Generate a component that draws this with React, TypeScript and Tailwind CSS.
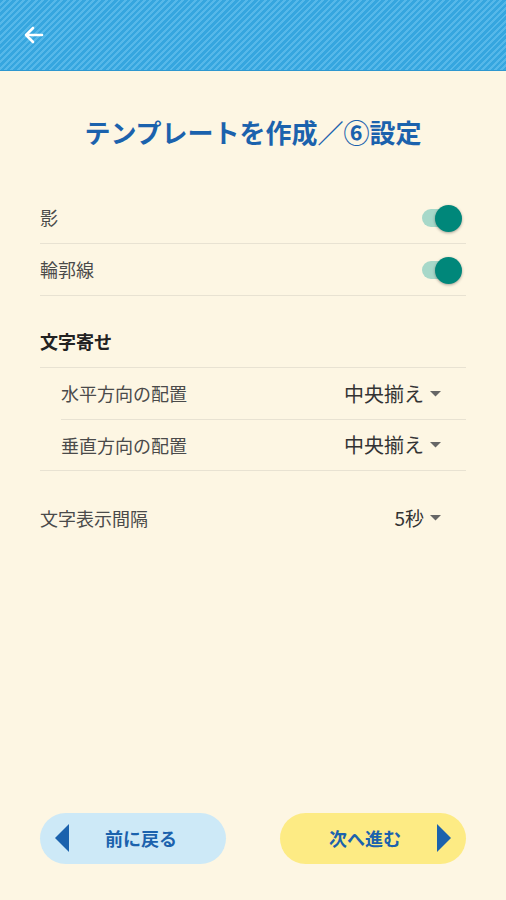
import React from "react";

const font = { fontFamily: '"Noto Sans CJK JP", "Noto Sans", sans-serif' };

function Toggle() {
  return (
    <div className="relative w-[42px] h-[28px] flex items-center">
      <div className="ml-[2px] w-[34px] h-[18px] rounded-full bg-[#a7d8c9]" />
      <div className="absolute right-[0px] top-[1px] w-[27px] h-[27px] rounded-full bg-[#00877a] shadow-[0_1px_3px_rgba(0,0,0,0.35)]" />
    </div>
  );
}

function Caret() {
  return (
    <svg width="11" height="6" viewBox="0 0 11 6" className="ml-[6px]">
      <path d="M0 0 L11 0 L5.5 5.5 Z" fill="#666" />
    </svg>
  );
}

export default function App() {
  return (
    <div className="w-[506px] h-[900px] bg-[#fdf6e3] flex flex-col" style={font}>
      <div className="h-[71px] shrink-0 flex items-center pl-[22px] bg-[repeating-linear-gradient(135deg,#36a6df_0px,#36a6df_2.5px,#56b8e9_2.5px,#56b8e9_4.5px)] border-b border-[#2e97cf]">
        <svg width="24" height="24" viewBox="0 0 24 24" fill="none" stroke="white" strokeWidth="2.6" strokeLinecap="round" strokeLinejoin="round">
          <path d="M20 12H5" />
          <path d="M11 5l-7 7 7 7" />
        </svg>
      </div>
      <div className="pt-[44px] text-center text-[26px] font-bold text-[#1b62ad] leading-[34px]">
        テンプレートを作成／⑥設定
      </div>
      <div className="px-[40px] mt-[43px] text-[18px] text-[#4a4a4a]">
        <div className="h-[52px] flex items-center justify-between border-b border-[#e8e2d2]">
          <span>影</span>
          <div className="mr-[4px]"><Toggle /></div>
        </div>
        <div className="h-[52px] flex items-center justify-between border-b border-[#e8e2d2]">
          <span>輪郭線</span>
          <div className="mr-[4px]"><Toggle /></div>
        </div>
        <div className="h-[72px] flex items-end pb-[12px] border-b border-[#e8e2d2] font-bold text-[#222]">
          文字寄せ
        </div>
        <div className="border-b border-[#e8e2d2]">
          <div className="ml-[21px] h-[52px] flex items-center justify-between border-b border-[#e8e2d2]">
            <span>水平方向の配置</span>
            <span className="flex items-center mr-[25px] text-[20px] text-[#333]">中央揃え<Caret /></span>
          </div>
          <div className="ml-[21px] h-[50px] flex items-center justify-between">
            <span>垂直方向の配置</span>
            <span className="flex items-center mr-[25px] text-[20px] text-[#333]">中央揃え<Caret /></span>
          </div>
        </div>
        <div className="h-[94px] flex items-center justify-between">
          <span>文字表示間隔</span>
          <span className="flex items-center mr-[25px] text-[19px] text-[#333]">5秒<Caret /></span>
        </div>
      </div>
      <div className="flex-1" />
      <div className="px-[40px] pb-[36px] flex justify-between">
        <button className="w-[186px] h-[51px] rounded-full bg-[#cde9f7] flex items-center relative">
          <svg width="15" height="28" viewBox="0 0 15 28" className="absolute left-[15px] top-[11px]">
            <path d="M14 0 L14 28 L0 14 Z" fill="#1b62ad" />
          </svg>
          <span className="flex-1 text-center text-[18px] font-bold text-[#1b62ad] pl-[16px]">前に戻る</span>
        </button>
        <button className="w-[186px] h-[51px] rounded-full bg-[#fdeb84] flex items-center relative">
          <span className="flex-1 text-center text-[18px] font-bold text-[#1b62ad] pr-[16px]">次へ進む</span>
          <svg width="15" height="28" viewBox="0 0 15 28" className="absolute right-[15px] top-[11px]">
            <path d="M1 0 L1 28 L15 14 Z" fill="#1b62ad" />
          </svg>
        </button>
      </div>
    </div>
  );
}
